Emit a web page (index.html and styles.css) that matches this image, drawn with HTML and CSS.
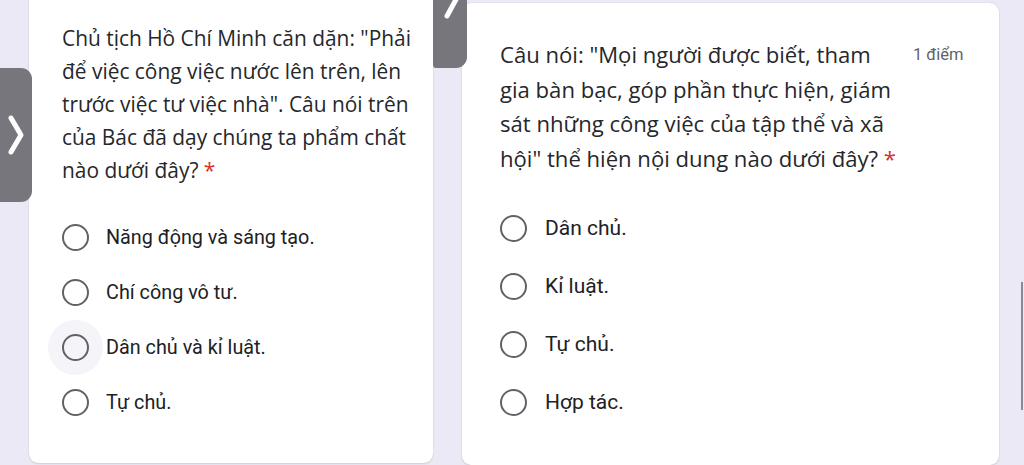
FILE: index.html
```html
<!DOCTYPE html>
<html lang="vi">
<head>
<meta charset="utf-8">
<link rel="stylesheet" href="styles.css">
</head>
<body>
<div class="page">
  <section class="card card-left">
    <div class="question">Chủ tịch Hồ Chí Minh căn dặn: "Phải<br>để việc công việc nước lên trên, lên<br>trước việc tư việc nhà". Câu nói trên<br>của Bác đã dạy chúng ta phẩm chất<br>nào dưới đây? <span class="req">*</span></div>
    <ul class="options">
      <li class="opt"><span class="radio"></span><span class="label">Năng động và sáng tạo.</span></li>
      <li class="opt"><span class="radio"></span><span class="label">Chí công vô tư.</span></li>
      <li class="opt"><span class="radio halo"></span><span class="label">Dân chủ và kỉ luật.</span></li>
      <li class="opt"><span class="radio"></span><span class="label">Tự chủ.</span></li>
    </ul>
  </section>
  <section class="card card-right">
    <div class="qhead">
      <div class="question">Câu nói: "Mọi người được biết, tham<br>gia bàn bạc, góp phần thực hiện, giám<br>sát những công việc của tập thể và xã<br>hội" thể hiện nội dung nào dưới đây? <span class="req">*</span></div>
      <div class="points">1 điểm</div>
    </div>
    <ul class="options">
      <li class="opt"><span class="radio"></span><span class="label">Dân chủ.</span></li>
      <li class="opt"><span class="radio"></span><span class="label">Kỉ luật.</span></li>
      <li class="opt"><span class="radio"></span><span class="label">Tự chủ.</span></li>
      <li class="opt"><span class="radio"></span><span class="label">Hợp tác.</span></li>
    </ul>
  </section>
</div>
<div class="side-tab">
  <svg width="32" height="134" viewBox="0 0 32 134"><polyline points="11,50 21,67 11,84" fill="none" stroke="#fff" stroke-width="5" stroke-linecap="round" stroke-linejoin="round"/></svg>
</div>
<div class="top-tab">
  <svg width="34" height="68" viewBox="0 0 34 68"><line x1="26" y1="-6" x2="14" y2="16" stroke="#fff" stroke-width="5" stroke-linecap="round"/></svg>
</div>
<div class="scrollbar"></div>
</body>
</html>
```

FILE: styles.css
```css
html, body {
  margin: 0;
  padding: 0;
}
body {
  width: 1024px;
  height: 465px;
  overflow: hidden;
  background: #ebe9f5;
  position: relative;
  font-family: "Open Sans", Roboto, "Liberation Sans", sans-serif;
  color: #202124;
}
.page {
  display: flex;
  align-items: flex-start;
  gap: 29px;
  padding-left: 29px;
}
.card {
  position: relative;
  z-index: 0;
  background: #fff;
  border-radius: 9px;
  box-shadow: 0 0 1px rgba(60, 64, 67, 0.25), 0 1px 2px rgba(60, 64, 67, 0.12);
  box-sizing: border-box;
}
.card-left {
  width: 404px;
  height: 473px;
  margin-top: -10px;
  padding: 32px 0 0 33px;
}
.card-right {
  width: 537px;
  height: 462px;
  margin-top: 3px;
  padding: 34px 0 0 38px;
}
.question {
  font-size: 20.9px;
  line-height: 33px;
  letter-spacing: 0;
  white-space: nowrap;
  color: #26272b;
}
.card-right .question {
  font-size: 22.1px;
  line-height: 34.6px;
}
.req {
  color: #d93025;
}
.qhead {
  display: flex;
  align-items: flex-start;
}
.qhead .question {
  width: 413px;
  flex: none;
}
.points {
  font-family: Roboto, "Liberation Sans", sans-serif;
  font-size: 16.5px;
  color: #5f6368;
  line-height: 36px;
}
.options {
  list-style: none;
  margin: 0;
  padding: 0;
}
.card-left .options {
  margin-top: 23px;
}
.card-right .options {
  margin-top: 24px;
}
.opt {
  display: flex;
  align-items: center;
  height: 55px;
  font-family: Roboto, "Liberation Sans", sans-serif;
  font-size: 19.8px;
  color: #202124;
}
.card-right .opt {
  height: 58px;
  font-size: 21px;
}
.radio {
  position: relative;
  width: 27px;
  height: 27px;
  border: 2.5px solid #5f6368;
  border-radius: 50%;
  box-sizing: border-box;
  margin-left: 0;
  margin-right: 17px;
  flex: none;
}
.card-right .radio {
  margin-right: 18px;
}
.halo::before {
  content: "";
  position: absolute;
  left: -16.5px;
  top: -16.5px;
  width: 55px;
  height: 55px;
  border-radius: 50%;
  background: #f5f4f9;
  z-index: -1;
}
.opt .label {
  position: relative;
}
.side-tab {
  position: absolute;
  left: 0;
  top: 68px;
  width: 32px;
  height: 134px;
  background: #77767c;
  border-radius: 0 11px 11px 0;
}
.side-tab svg, .top-tab svg {
  display: block;
}
.top-tab {
  position: absolute;
  left: 433px;
  top: 0;
  width: 34px;
  height: 68px;
  background: #77767c;
  border-radius: 0 0 11px 3px;
  overflow: hidden;
}
.scrollbar {
  position: absolute;
  left: 1021px;
  top: 282px;
  width: 2px;
  height: 128px;
  background: #8a8990;
}
```
